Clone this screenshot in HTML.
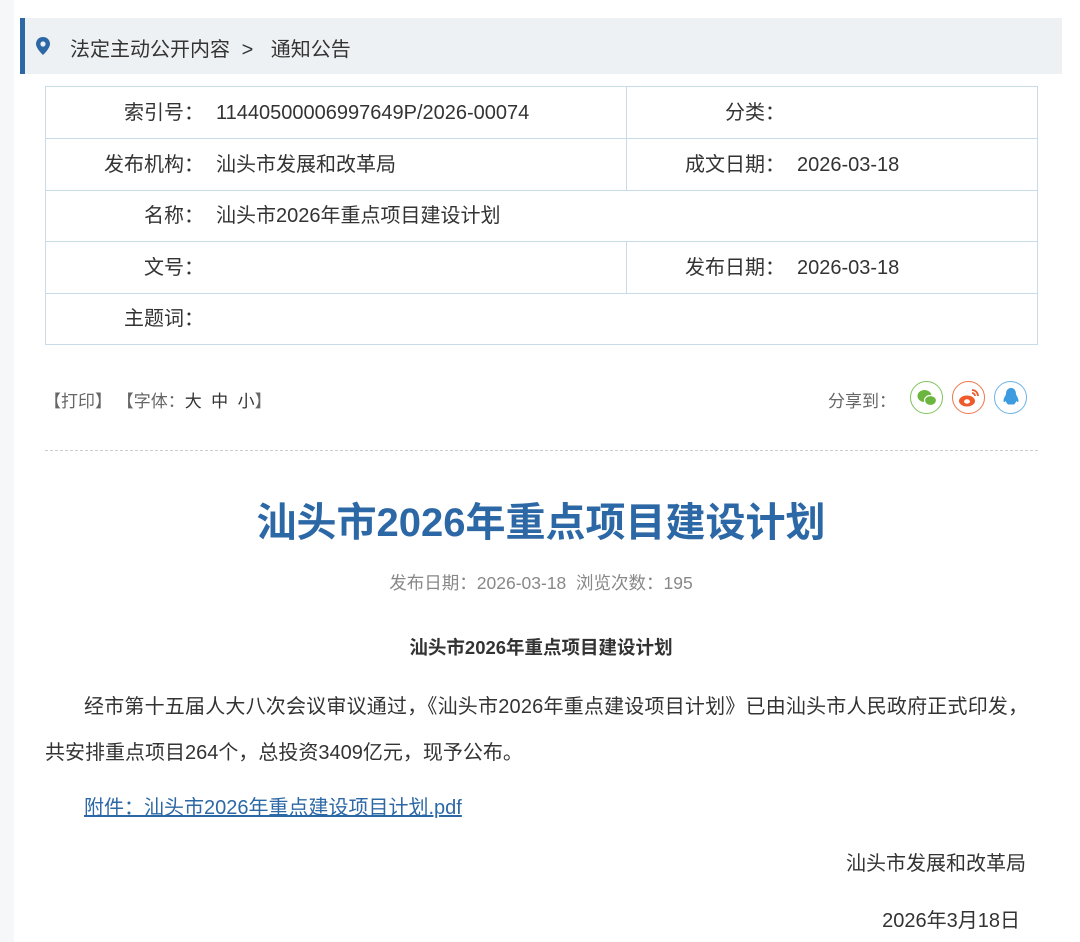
<!DOCTYPE html>
<html><head><meta charset="utf-8"><style>
body{margin:0;width:1080px;height:942px;background:#fff;font-family:"Liberation Sans","Noto Sans CJK SC",sans-serif;color:#333;position:relative;overflow:hidden}
.a{position:absolute;white-space:nowrap}
.bc{position:absolute;left:20px;top:18px;width:1042px;height:56px;background:#eef1f4;border-left:5px solid #2d68a6;box-sizing:border-box}
.tb{position:absolute;left:45px;top:86px;width:993px;height:259px;border:1px solid #c8dbe8;box-sizing:border-box;font-size:20px}
.r{position:absolute;left:0;width:991px;height:51px;border-bottom:1px solid #c8dbe8;line-height:53px}
.r span{position:absolute;white-space:nowrap}
.lb{right:833px}
.lb2{right:252px}
.v1{left:170px}
.v2{left:751px}
.sep{position:absolute;left:580px;top:0;height:51px;border-left:1px solid #c8dbe8}
.ic{position:absolute;top:381px;width:33px;height:33px;border-radius:50%;box-sizing:border-box;display:flex;align-items:center;justify-content:center}
</style></head><body>
<div class="a" style="left:0;top:0;width:14px;height:942px;background:#f6f7f9"></div>
<div class="bc"></div>
<svg class="a" style="left:36px;top:37px" width="14" height="18" viewBox="0 0 14 18"><path d="M7 0C3 0 0 3 0 7c0 4.5 7 11 7 11s7-6.5 7-11C14 3 11 0 7 0z" fill="#2d68a6"/><circle cx="7" cy="7" r="2.6" fill="#eef1f4"/></svg>
<div class="a" style="left:70px;top:33px;font-size:20px;color:#333">法定主动公开内容 <span style="margin:0 12px 0 6px">&gt;</span> 通知公告</div>
<div class="tb">
<div class="r" style="top:0"><span class="lb">索引号：</span><span class="v1">11440500006997649P/2026-00074</span><div class="sep"></div><span class="lb2">分类：</span></div>
<div class="r" style="top:51.5px"><span class="lb">发布机构：</span><span class="v1">汕头市发展和改革局</span><div class="sep"></div><span class="lb2">成文日期：</span><span class="v2">2026-03-18</span></div>
<div class="r" style="top:103px"><span class="lb">名称：</span><span class="v1">汕头市2026年重点项目建设计划</span></div>
<div class="r" style="top:154.5px"><span class="lb">文号：</span><div class="sep"></div><span class="lb2">发布日期：</span><span class="v2">2026-03-18</span></div>
<div class="r" style="top:206px;border-bottom:none"><span class="lb">主题词：</span></div>
</div>
<div class="a" style="left:44px;top:387px;font-size:17px;color:#666">【打印】 【字体：<span style="color:#333">大 &nbsp;中 &nbsp;小</span>】</div>
<div class="a" style="left:828px;top:387px;font-size:17px;color:#666">分享到：</div>
<div class="ic" style="left:910px;border:1.5px solid #7fc35a"><svg width="22" height="20" viewBox="0 0 22 20"><ellipse cx="8.5" cy="8" rx="7" ry="6" fill="#6bb63f"/><ellipse cx="14.5" cy="12.5" rx="6" ry="5" fill="#6bb63f" stroke="#fff" stroke-width="1.2"/></svg></div>
<div class="ic" style="left:952px;border:1.5px solid #f0754a"><svg width="22" height="20" viewBox="0 0 22 20"><ellipse cx="9" cy="13" rx="8" ry="5.5" fill="#ef5a2a"/><ellipse cx="9" cy="13.5" rx="3" ry="2.2" fill="#fff"/><path d="M14 2a6 6 0 0 1 6 6M14 5a3 3 0 0 1 3 3" stroke="#ef5a2a" stroke-width="1.8" fill="none"/></svg></div>
<div class="ic" style="left:994px;border:1.5px solid #6bb4ea"><svg width="20" height="22" viewBox="0 0 20 22"><path d="M10 1C6.5 1 5 4 5 7c0 1.2-2.5 3.5-2.5 7 0 1.3 1.2 1.2 2.2 0 .5 1.5 1.5 3 2.5 3.5h5.6c1-.5 2-2 2.5-3.5 1 1.2 2.2 1.3 2.2 0 0-3.5-2.5-5.8-2.5-7 0-3-1.5-6-5-6z" fill="#3d9be0"/></svg></div>
<div class="a" style="left:45px;top:450px;width:993px;border-top:1px dashed #ccc"></div>
<div class="a" style="left:0;width:1082px;text-align:center;top:490px;font-size:40px;font-weight:bold;color:#2d68a6">汕头市2026年重点项目建设计划</div>
<div class="a" style="left:0;width:1082px;text-align:center;top:570px;font-size:17.5px;color:#888">发布日期：2026-03-18 &nbsp;浏览次数：195</div>
<div class="a" style="left:0;width:1082px;text-align:center;top:634px;font-size:18.5px;font-weight:bold;color:#333">汕头市2026年重点项目建设计划</div>
<div class="a" style="left:84px;top:690px;font-size:20px;letter-spacing:0.2px">经市第十五届人大八次会议审议通过，《汕头市2026年重点建设项目计划》已由汕头市人民政府正式印发，</div>
<div class="a" style="left:45px;top:736px;font-size:20px">共安排重点项目264个，总投资3409亿元，现予公布。</div>
<div class="a" style="left:84px;top:791px;font-size:20px;color:#2d68a6;text-decoration:underline">附件：汕头市2026年重点建设项目计划.pdf</div>
<div class="a" style="right:54px;top:847px;font-size:20px">汕头市发展和改革局</div>
<div class="a" style="right:60px;top:904px;font-size:20px">2026年3月18日</div>
</body></html>
